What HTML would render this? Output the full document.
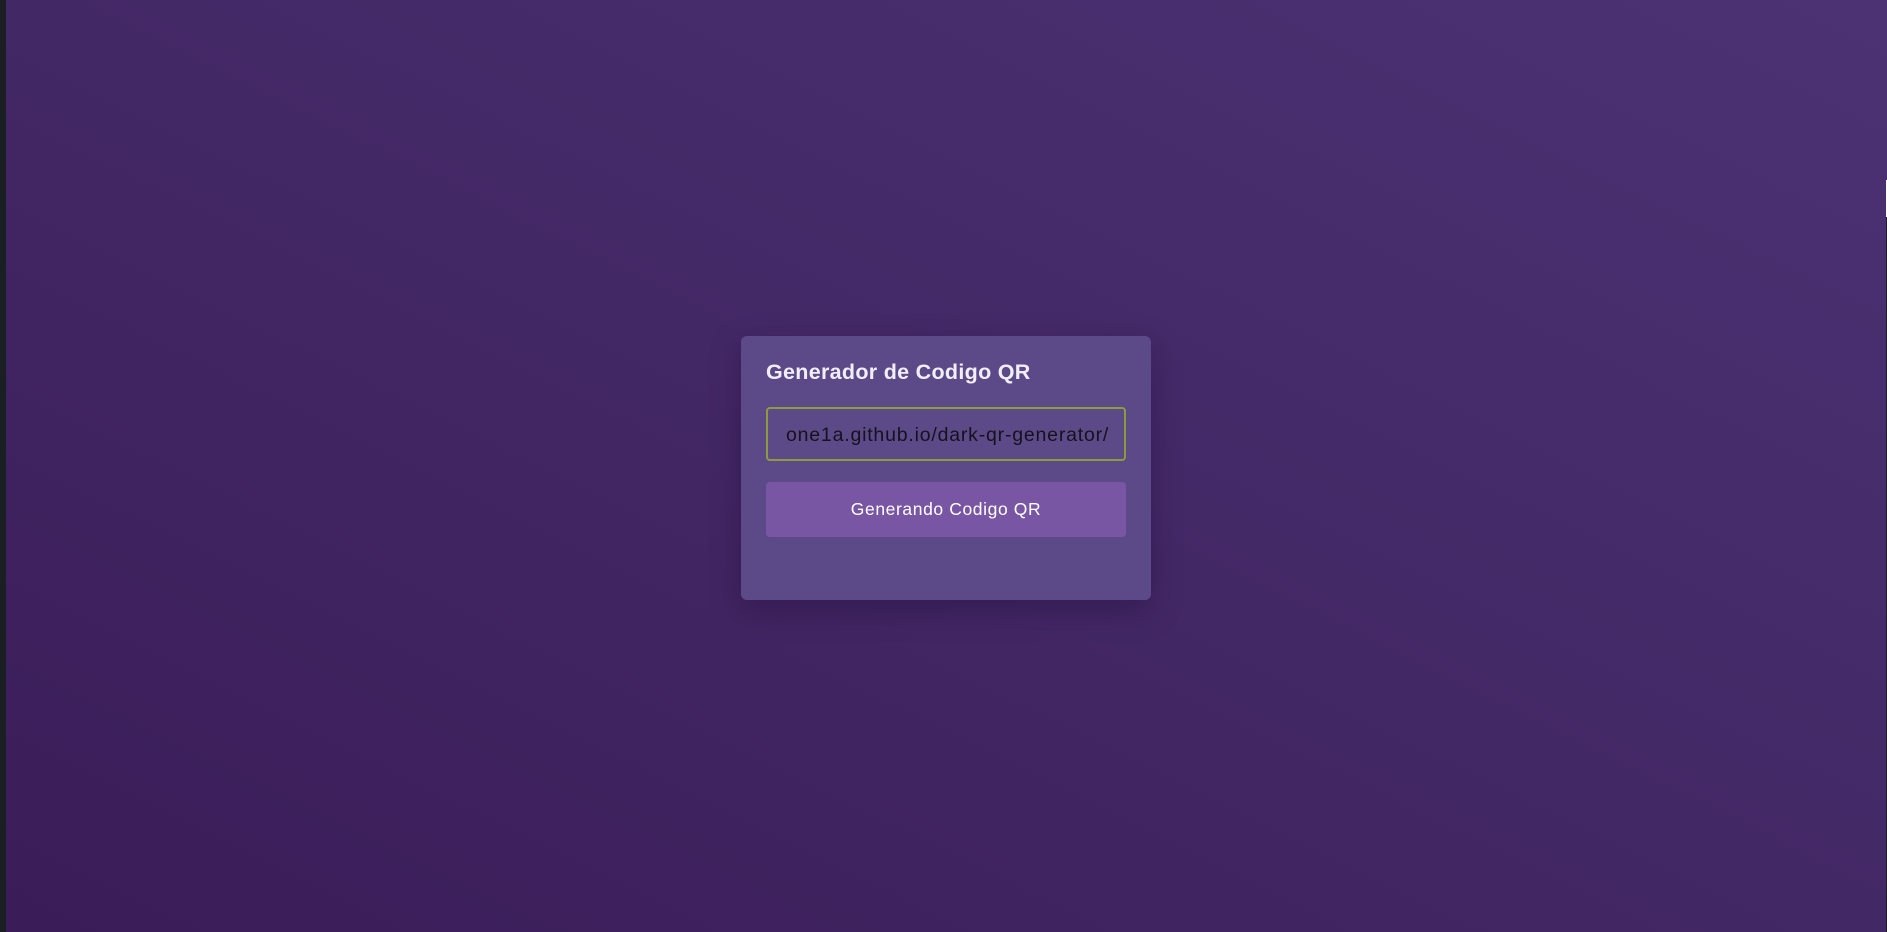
<!DOCTYPE html>
<html><head><meta charset="utf-8"><style>
html,body{margin:0;padding:0;width:1887px;height:932px;overflow:hidden;}
body{background:linear-gradient(to top right,#3a1c58 0%,#432866 50%,#4c3273 100%);position:relative;font-family:"Liberation Sans",sans-serif;}
.ls{position:absolute;left:0;top:0;width:6px;height:932px;background:#1b1e22;}
.rs{position:absolute;right:0;top:217px;width:1px;height:715px;background:#1b1e22;}
.rw{position:absolute;right:0;top:180px;width:1px;height:37px;background:#fff;}
.card{position:absolute;left:741px;top:336px;width:410px;height:264px;background:#5c4a88;border-radius:6px;box-shadow:0 10px 30px rgba(30,10,50,.35);}
h1{position:absolute;left:25px;top:24px;margin:0;font-size:21.5px;font-weight:bold;color:#f2eef8;letter-spacing:0.3px;}
.inp{position:absolute;left:25px;top:71px;width:356px;height:50px;border:2px solid #8c9c3c;border-radius:4px;box-sizing:content-box;}
.clip{position:absolute;left:18px;right:12px;top:0;bottom:0;overflow:hidden;}
.clip span{position:absolute;left:0px;top:15px;font-size:19.5px;color:#15121c;white-space:nowrap;letter-spacing:0.8px;}
.btn{position:absolute;left:25px;top:146px;width:360px;height:55px;background:#7856a4;border-radius:4px;color:#fff;font-size:17.5px;text-align:center;line-height:55px;letter-spacing:0.6px;}
</style></head><body>
<div class="ls"></div><div class="rw"></div><div class="rs"></div>
<div class="card">
<h1>Generador de Codigo QR</h1>
<div class="inp"><div class="clip"><span>one1a.github.io/dark-qr-generator/</span></div></div>
<div class="btn">Generando Codigo QR</div>
</div>
</body></html>
